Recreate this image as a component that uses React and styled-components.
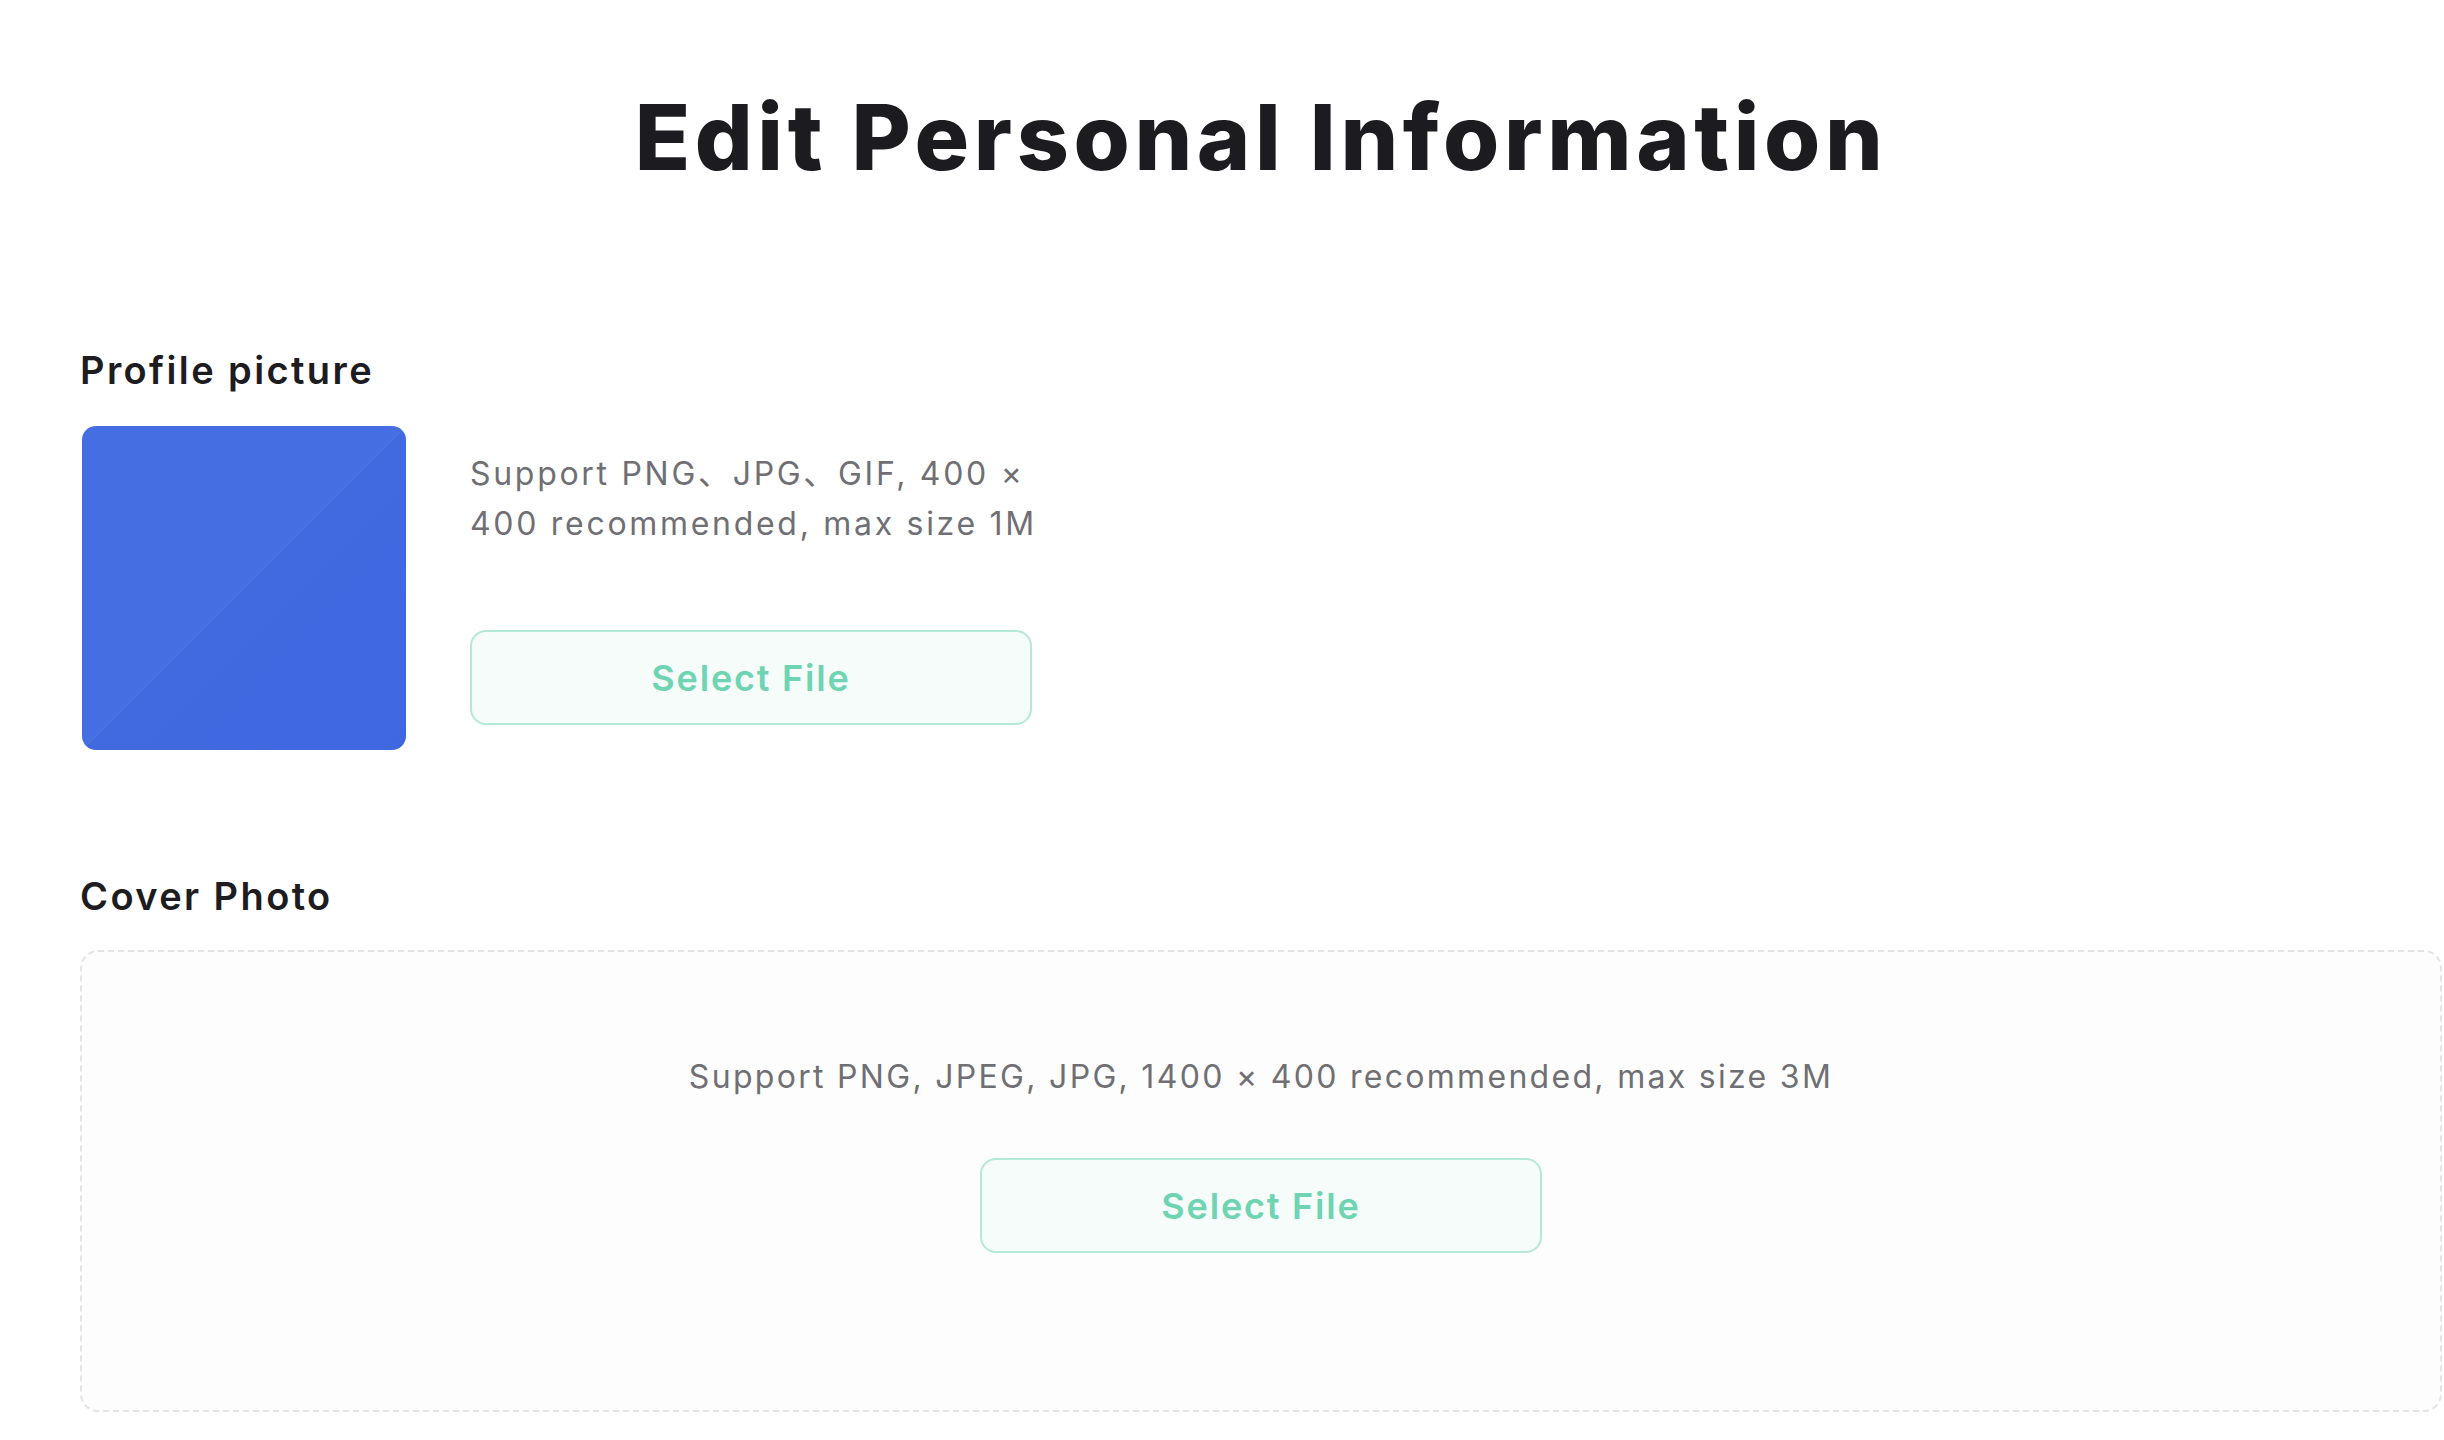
import React from 'react';
import styled, { createGlobalStyle } from 'styled-components';

const GlobalStyle = createGlobalStyle`
    html, body {
        margin: 0;
        padding: 0;
        background: #ffffff;
    }
    body {
        font-family: Inter, "Noto Sans CJK SC", sans-serif;
        -webkit-font-smoothing: antialiased;
    }
`;

function App() {
    return (
        <PageStyled>
            <GlobalStyle />
            <div className="inner">
                <Title>Edit Personal Information</Title>

                <SectionLabel $top={168}>Profile picture</SectionLabel>
                <ProfileRow>
                    <Avatar />
                    <div className="side">
                        <Hint>
                            Support PNG、JPG、GIF, 400 ×
                            <br />
                            400 recommended, max size 1M
                        </Hint>
                        <SelectButton type="button" $top={81}>Select File</SelectButton>
                    </div>
                </ProfileRow>

                <SectionLabel $top={127}>Cover Photo</SectionLabel>
                <CoverBox>
                    <Hint $center>Support PNG, JPEG, JPG, 1400 × 400 recommended, max size 3M</Hint>
                    <SelectButton type="button" $top={65}>Select File</SelectButton>
                </CoverBox>
            </div>
        </PageStyled>
    );
}

const PageStyled = styled.main`
    padding: 92px 0 0 80px;
    min-height: 1440px;
    box-sizing: border-box;
    overflow: hidden;

    .inner {
        width: 2362px;
    }
`;

const Title = styled.h1`
    margin: 0;
    text-align: center;
    font-size: 91px;
    line-height: 1;
    font-weight: 800;
    color: #1b1b20;
    letter-spacing: 4.6px;
`;

const SectionLabel = styled.h2`
    margin: ${(p) => p.$top}px 0 0;
    font-size: 38px;
    line-height: 1;
    font-weight: 600;
    color: #1c1c21;
    letter-spacing: 2.4px;
`;

const ProfileRow = styled.div`
    display: flex;
    gap: 64px;
    margin-top: 37px;

    .side {
        display: flex;
        flex-direction: column;
        align-items: flex-start;
        padding-top: 23px;
    }
`;

const Avatar = styled.div`
    width: 324px;
    height: 324px;
    margin-left: 2px;
    border-radius: 14px;
    background: linear-gradient(
        to bottom right,
        #456ee2 0%,
        #456ee2 49.7%,
        #4a73e4 50%,
        #4169e0 50.3%,
        #3f67df 100%
    );
`;

const Hint = styled.p`
    margin: 0;
    font-size: 32px;
    line-height: ${(p) => (p.$center ? 1 : '50px')};
    font-weight: 400;
    color: #6f6f74;
    letter-spacing: ${(p) => (p.$center ? '2.3px' : '2.7px')};
    text-align: ${(p) => (p.$center ? 'center' : 'left')};
`;

const SelectButton = styled.button`
    margin-top: ${(p) => p.$top}px;
    width: 562px;
    height: 95px;
    display: flex;
    align-items: center;
    justify-content: center;
    border: 2px solid #b4e9d7;
    border-radius: 16px;
    background: #f5fcfa;
    color: #6fd4b2;
    font-family: inherit;
    font-size: 36px;
    font-weight: 600;
    letter-spacing: 1.8px;
    cursor: pointer;
`;

const CoverBox = styled.div`
    margin-top: 35px;
    height: 462px;
    box-sizing: border-box;
    padding-top: 109px;
    border: 2px dashed #e4e4e6;
    border-radius: 18px;
    background: #fdfdfd;
    display: flex;
    flex-direction: column;
    align-items: center;
`;

export default App;
